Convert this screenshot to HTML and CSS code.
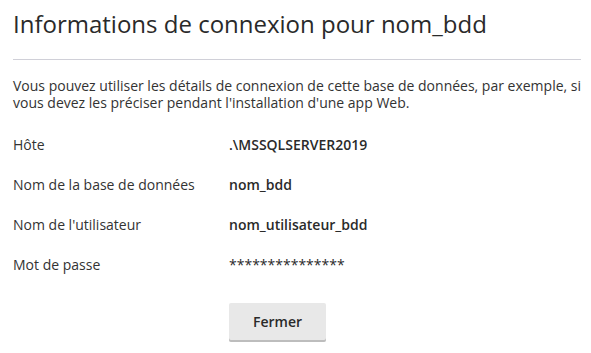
FILE: index.html
```html
<!DOCTYPE html>
<html lang="fr">
<head>
<meta charset="utf-8">
<title>Informations de connexion</title>
<link rel="stylesheet" href="styles.css">
</head>
<body>
<div class="dialog">
  <h1 class="title">Informations de connexion pour nom_bdd</h1>
  <div class="divider"></div>
  <p class="intro">Vous pouvez utiliser les détails de connexion de cette base de données, par exemple, si vous devez les préciser pendant l'installation d'une app Web.</p>
  <div class="details">
    <div class="label">Hôte</div><div class="value">.\MSSQLSERVER2019</div>
    <div class="label">Nom de la base de données</div><div class="value">nom_bdd</div>
    <div class="label">Nom de l'utilisateur</div><div class="value">nom_utilisateur_bdd</div>
    <div class="label">Mot de passe</div><div class="value password">***************</div>
  </div>
  <div class="actions">
    <button class="btn" type="button">Fermer</button>
  </div>
</div>
</body>
</html>
```

FILE: styles.css
```css
html, body {
  margin: 0;
  padding: 0;
  background: #ffffff;
}
body {
  font-family: "Open Sans", "Noto Sans", sans-serif;
  color: #333333;
}
.dialog {
  padding: 8px 10px 0 13px;
}
.title {
  margin: 0;
  font-size: 24px;
  line-height: 32px;
  font-weight: 400;
  color: #2a2a2a;
}
.divider {
  margin-top: 19px;
  height: 1px;
  background: #d0d0d8;
}
.intro {
  margin: 18px 0 0;
  font-size: 14px;
  line-height: 16.5px;
  color: #333333;
}
.details {
  margin-top: 13px;
  display: grid;
  grid-template-columns: 216px 1fr;
  grid-auto-rows: 40px;
  align-items: center;
  font-size: 14px;
  line-height: 17px;
}
.label {
  color: #333333;
}
.value {
  font-weight: 600;
  color: #2a2a2a;
}
.password {
  font-weight: 400;
}
.actions {
  margin-top: 19px;
  padding-left: 216px;
}
.btn {
  width: 97px;
  height: 39px;
  margin: 0;
  padding: 0 0 2px;
  border: 0;
  border-radius: 2px;
  background: #e8e8e8;
  box-shadow: inset 0 -2px 0 #bdbdbd;
  font-family: "Open Sans", "Noto Sans", sans-serif;
  font-size: 14px;
  font-weight: 600;
  color: #2a2a2a;
}
```
